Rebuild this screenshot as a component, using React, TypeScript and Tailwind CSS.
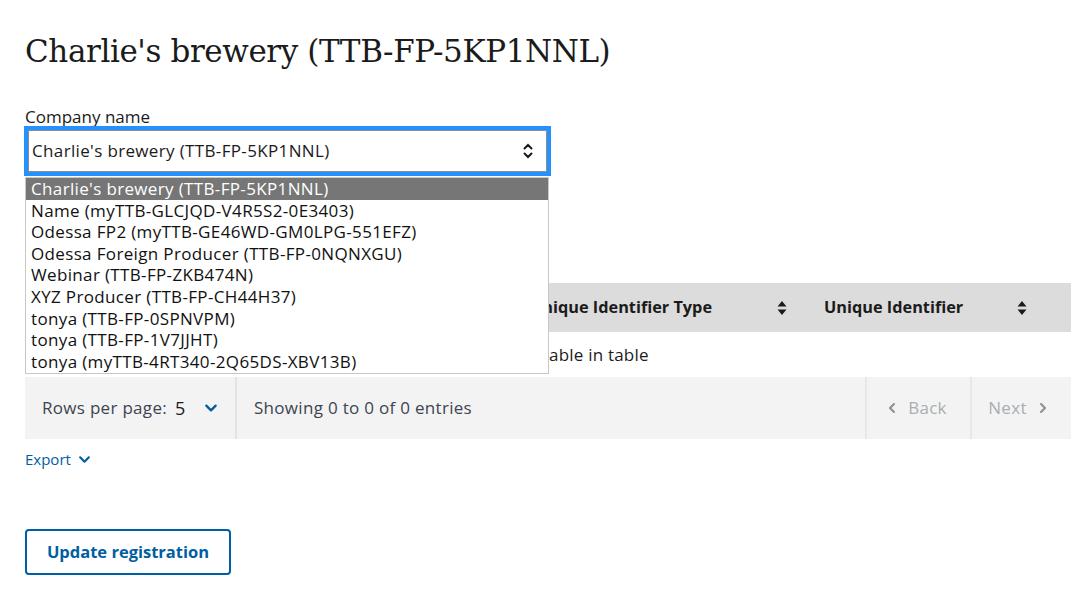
import React from "react";

const options = [
  "Charlie's brewery (TTB-FP-5KP1NNL)",
  "Name (myTTB-GLCJQD-V4R5S2-0E3403)",
  "Odessa FP2 (myTTB-GE46WD-GM0LPG-551EFZ)",
  "Odessa Foreign Producer (TTB-FP-0NQNXGU)",
  "Webinar (TTB-FP-ZKB474N)",
  "XYZ Producer (TTB-FP-CH44H37)",
  "tonya (TTB-FP-0SPNVPM)",
  "tonya (TTB-FP-1V7JJHT)",
  "tonya (myTTB-4RT340-2Q65DS-XBV13B)",
];

function SortIcon() {
  return (
    <svg width="10" height="16" viewBox="0 0 10 16" className="shrink-0">
      <path d="M5 1 L9.5 6.5 H0.5 Z" fill="#1b1b1b" />
      <path d="M5 15 L9.5 9.5 H0.5 Z" fill="#1b1b1b" />
    </svg>
  );
}

function Chevron({ dir, color, size = 12 }: { dir: "down" | "left" | "right"; color: string; size?: number }) {
  const d =
    dir === "down" ? "M2 4 L6 8 L10 4" : dir === "left" ? "M8 2 L4 6 L8 10" : "M4 2 L8 6 L4 10";
  return (
    <svg width={size} height={size} viewBox="0 0 12 12" className="shrink-0">
      <path d={d} fill="none" stroke={color} strokeWidth="2" strokeLinecap="round" strokeLinejoin="round" />
    </svg>
  );
}

export default function App() {
  return (
    <div className="w-[1090px] h-[598px] bg-white overflow-hidden pl-[25px] pr-[19px] pt-[29px] text-[#1b1b1b] font-['Open_Sans',sans-serif] relative">
      <h1 className="font-['DejaVu_Serif',serif] text-[31px] leading-[44px] tracking-[-0.4px] font-normal">
        Charlie's brewery (TTB-FP-5KP1NNL)
      </h1>
      <div className="mt-[35px] text-[17px] leading-[18px]">Company name</div>
      <div className="relative -ml-px w-[527px]">
        <div className="h-[50px] border-4 border-[#2491ff]">
          <div className="h-full border border-[#8d8d8d] flex items-center justify-between pl-[3px] pr-[12px] text-[17px] tracking-[0.35px]">
            <span>Charlie's brewery (TTB-FP-5KP1NNL)</span>
            <svg width="12" height="20" viewBox="0 0 12 20">
              <path d="M2.5 7.5 L6 4 L9.5 7.5" fill="none" stroke="#1b1b1b" strokeWidth="2" strokeLinecap="round" />
              <path d="M2.5 12.5 L6 16 L9.5 12.5" fill="none" stroke="#1b1b1b" strokeWidth="2" strokeLinecap="round" />
            </svg>
          </div>
        </div>
        <div className="absolute left-px top-[51px] w-[524px] bg-white border border-[#c8c8c8] z-10 pb-[1px]">
          {options.map((o, i) => (
            <div
              key={o}
              className={`h-[21.6px] leading-[21.6px] pl-[5px] text-[17px] tracking-[0.35px] ${
                i === 0 ? "bg-[#767676] text-white" : "text-[#111]"
              }`}
            >
              {o}
            </div>
          ))}
        </div>
      </div>

      <div className="mt-[107px] w-[1046px]">
        <div className="h-[49px] bg-[#dcdcdc] flex items-center text-[16.3px] font-bold">
          <div className="w-[489px] pl-[16px]"></div>
          <div className="w-[294px] pl-[16px] pr-[21px] flex items-center justify-between">
            <span>Unique Identifier Type</span>
            <SortIcon />
          </div>
          <div className="w-[263px] pl-[16px] pr-[44px] flex items-center justify-between">
            <span>Unique Identifier</span>
            <SortIcon />
          </div>
        </div>
        <div className="h-[45px] flex items-center justify-center text-[17px] tracking-[0.2px] pr-[4px]">
          No data available in table
        </div>
        <div className="h-[62px] bg-[#f3f3f3] flex text-[17px] tracking-[0.3px]">
          <div className="w-[212px] border-r-2 border-[#e4e4e4] flex items-center pl-[17px] gap-[8px]">
            <span className="text-[#3d4551]">Rows per page:</span>
            <span className="text-[#1b1b1b] text-[18px]">5</span>
            <span className="ml-[10px]">
              <Chevron dir="down" color="#005ea2" size={14} />
            </span>
          </div>
          <div className="flex-1 flex items-center pl-[17px] text-[#3d4551]">Showing 0 to 0 of 0 entries</div>
          <div className="w-[105px] border-l-2 border-[#e8e8e8] flex items-center justify-center gap-[10px] text-[#a9aeb1] pr-[4px]">
            <Chevron dir="left" color="#8a8f93" size={12} />
            <span>Back</span>
          </div>
          <div className="w-[101px] border-l-2 border-[#e8e8e8] flex items-center justify-center gap-[10px] text-[#a9aeb1] pr-[6px]">
            <span>Next</span>
            <Chevron dir="right" color="#8a8f93" size={12} />
          </div>
        </div>
      </div>

      <div className="mt-[10px] flex items-center gap-[7px] text-[15px] text-[#005ea2] leading-[20px]">
        <span>Export</span>
        <Chevron dir="down" color="#005ea2" size={13} />
      </div>

      <button className="mt-[60px] w-[206px] h-[46px] border-2 border-[#005ea2] rounded-[4px] text-[#005ea2] font-bold text-[16.5px] flex items-center justify-center">
        Update registration
      </button>
    </div>
  );
}
